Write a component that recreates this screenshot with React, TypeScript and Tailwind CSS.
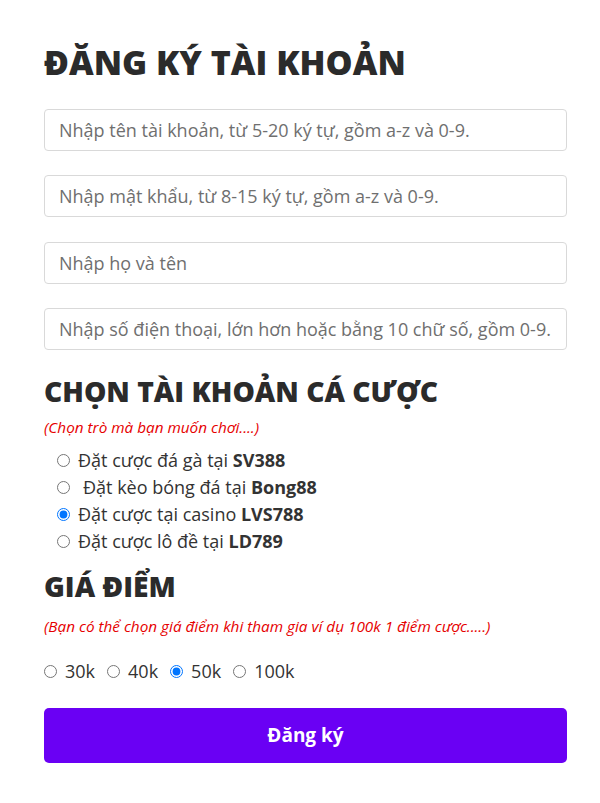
import React, { useState } from 'react';

const GAMES = [
  { label: 'Đặt cược đá gà tại ', brand: 'SV388', pad: false },
  { label: 'Đặt kèo bóng đá tại ', brand: 'Bong88', pad: true },
  { label: 'Đặt cược tại casino ', brand: 'LVS788', pad: false },
  { label: 'Đặt cược lô đề tại ', brand: 'LD789', pad: false },
];

const PRICES = ['30k', '40k', '50k', '100k'];

const inputCls =
  'w-full h-[42px] px-[14px] rounded-[4px] border border-[#d9d9d9] bg-white text-[18px] text-[#333] placeholder:text-[#6f6f6f] outline-none';

export default function App() {
  const [game, setGame] = useState('LVS788');
  const [price, setPrice] = useState('50k');

  return (
    <div className="min-h-screen bg-white text-[#333]" style={{ fontFamily: '"Open Sans", "Noto Sans", sans-serif' }}>
      <form className="ml-[44px] w-[523px] pt-[42px] pb-10" onSubmit={(e) => e.preventDefault()}>
        <h1 className="text-[34px] font-extrabold leading-[1.2] text-[#2b2b2b]">ĐĂNG KÝ TÀI KHOẢN</h1>

        <div className="mt-[26px] flex flex-col gap-[24.4px]">
          <input className={inputCls} placeholder="Nhập tên tài khoản, từ 5-20 ký tự, gồm a-z và 0-9." />
          <input className={inputCls} type="password" placeholder="Nhập mật khẩu, từ 8-15 ký tự, gồm a-z và 0-9." />
          <input className={inputCls} placeholder="Nhập họ và tên" />
          <input className={inputCls} placeholder="Nhập số điện thoại, lớn hơn hoặc bằng 10 chữ số, gồm 0-9." />
        </div>

        <h2 className="mt-[25px] text-[28.2px] font-extrabold leading-[1.2] text-[#2b2b2b]">CHỌN TÀI KHOẢN CÁ CƯỢC</h2>
        <p className="mt-[7px] text-[15.3px] italic text-[#e60000]">(Chọn trò mà bạn muốn chơi....)</p>

        <div className="mt-[8px] flex flex-col pl-[13px]">
          {GAMES.map((g) => (
            <label key={g.brand} className="flex items-center gap-[8px] h-[27px] text-[18px] text-[#333]">
              <input
                type="radio"
                name="game"
                className="m-0 w-[13px] h-[13px] accent-[#0075ff]"
                checked={game === g.brand}
                onChange={() => setGame(g.brand)}
              />
              <span className={g.pad ? 'pl-[5px]' : ''}>
                {g.label}
                <b className="font-bold">{g.brand}</b>
              </span>
            </label>
          ))}
        </div>

        <h2 className="mt-[15px] text-[28.2px] font-extrabold leading-[1.2] text-[#2b2b2b]">GIÁ ĐIỂM</h2>
        <p className="mt-[11px] text-[15.3px] italic text-[#e60000]">
          (Bạn có thể chọn giá điểm khi tham gia ví dụ 100k 1 điểm cược.....)
        </p>

        <div className="mt-[20px] flex items-center gap-[12px]">
          {PRICES.map((p) => (
            <label key={p} className="flex items-center gap-[8px] text-[18px] text-[#333]">
              <input
                type="radio"
                name="price"
                className="m-0 w-[13px] h-[13px] accent-[#0075ff]"
                checked={price === p}
                onChange={() => setPrice(p)}
              />
              <span>{p}</span>
            </label>
          ))}
        </div>

        <button
          type="submit"
          className="mt-[23px] w-full h-[55px] rounded-[5px] bg-[#6a00f4] text-white text-[19px] font-bold"
        >
          Đăng ký
        </button>
      </form>
    </div>
  );
}
